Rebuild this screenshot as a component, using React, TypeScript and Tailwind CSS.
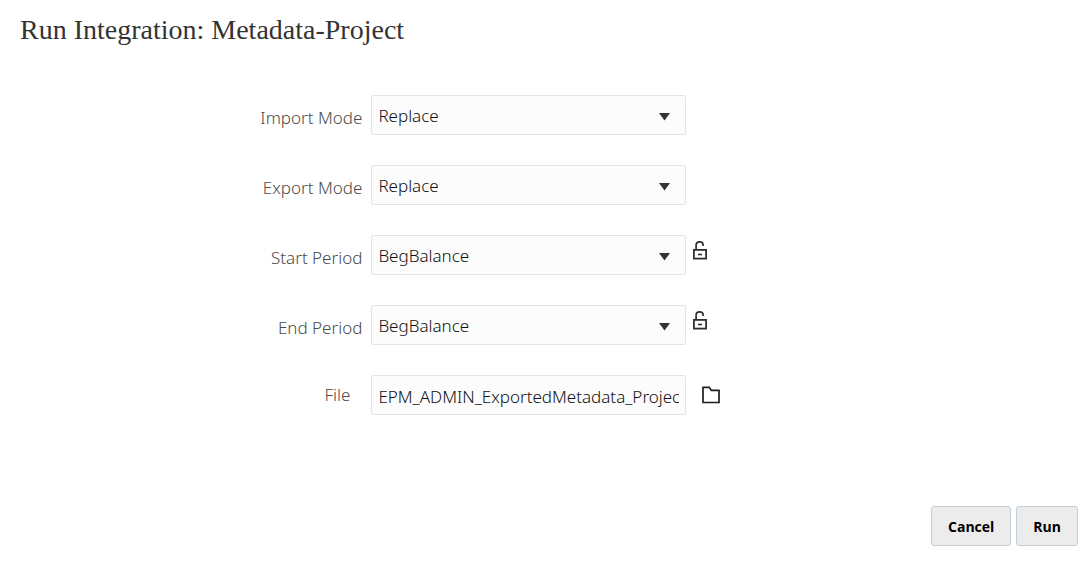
import { useState, type ReactNode } from "react";

const sans = "font-['Noto_Sans','Open_Sans',sans-serif]";
const field =
  "h-10 w-full appearance-none rounded-xs border border-[#e4e4e4] bg-[#fcfcfc] px-1.5 pt-0.5 text-[17px] font-light text-[#111] outline-none focus:border-[#8aa4b8]";

function UnlockIcon() {
  return (
    <svg width="14" height="19" viewBox="0 0 14 19" fill="none" stroke="#2f2f35" aria-hidden="true">
      <rect x="0.9" y="8.9" width="12.2" height="8.7" strokeWidth="1.8" />
      <path d="M3.1 8.5V4.2C3.1 2.1 4.5 0.9 6.6 0.9S10.1 2.1 10.1 4.2V5" strokeWidth="1.7" />
      <path d="M5 13.5H9" strokeWidth="1.6" />
    </svg>
  );
}

function FolderIcon() {
  return (
    <svg width="18" height="18" viewBox="0 0 18 18" fill="none" stroke="#1d1d22" strokeWidth="1.7" aria-hidden="true">
      <path d="M1 1.4H7.3L9.3 4.4H17V16.5H1Z" />
    </svg>
  );
}

function Row({ id, label, children, action, file }: {
  id: string;
  label: string;
  children: ReactNode;
  action?: ReactNode;
  file?: boolean;
}) {
  return (
    <div className="flex h-10">
      <label
        htmlFor={id}
        className={`w-[33.4%] shrink-0 text-right text-[17px] leading-6 font-light text-[#4a4a4a] ${file ? "pt-2 pr-3" : "pt-[11px]"}`}
      >
        {label}
      </label>
      <div className="relative ml-[9px] w-[29%]">{children}</div>
      {action}
    </div>
  );
}

function Picker({ id, options }: { id: string; options: string[] }) {
  const [value, setValue] = useState(options[0]);
  return (
    <>
      <select id={id} value={value} onChange={(e) => setValue(e.target.value)} className={field}>
        {options.map((o) => (
          <option key={o}>{o}</option>
        ))}
      </select>
      <svg
        className="pointer-events-none absolute top-[18px] right-4"
        width="11"
        height="8"
        viewBox="0 0 11 8"
        aria-hidden="true"
      >
        <path d="M0 0H11L5.5 7.5Z" fill="#333" />
      </svg>
    </>
  );
}

function LockButton({ label }: { label: string }) {
  return (
    <button type="button" aria-label={label} className="ml-[7px] self-start pt-1.5">
      <UnlockIcon />
    </button>
  );
}

const button =
  "h-10 rounded-[3px] border border-[#c4ced7] bg-[#ececec] px-4 pt-0.5 font-['Open_Sans',sans-serif] text-sm font-bold text-black hover:bg-[#e2e2e2]";

export default function App() {
  const [file, setFile] = useState("EPM_ADMIN_ExportedMetadata_Project.csv");
  return (
    <main className={`min-h-screen bg-white pt-3 ${sans}`}>
      <h1 className="px-5 font-['Liberation_Serif',serif] text-[28px] leading-9 text-[#333]">
        Run Integration: Metadata-Project
      </h1>
      <form onSubmit={(e) => e.preventDefault()}>
        <div className="mt-[47px] flex flex-col gap-[30px]">
          <Row id="import-mode" label="Import Mode">
            <Picker id="import-mode" options={["Replace", "Merge", "No Import"]} />
          </Row>
          <Row id="export-mode" label="Export Mode">
            <Picker id="export-mode" options={["Replace", "Merge", "No Export"]} />
          </Row>
          <Row id="start-period" label="Start Period" action={<LockButton label="Lock start period" />}>
            <Picker id="start-period" options={["BegBalance"]} />
          </Row>
          <Row id="end-period" label="End Period" action={<LockButton label="Lock end period" />}>
            <Picker id="end-period" options={["BegBalance"]} />
          </Row>
          <Row
            id="file"
            label="File"
            file
            action={
              <button type="button" aria-label="Browse for file" className="ml-4">
                <FolderIcon />
              </button>
            }
          >
            <input id="file" type="text" value={file} onChange={(e) => setFile(e.target.value)} className={field} />
          </Row>
        </div>
        <div className="mt-[91px] flex justify-end gap-[5px] pr-[7px]">
          <button type="button" className={button}>Cancel</button>
          <button type="submit" className={button}>Run</button>
        </div>
      </form>
    </main>
  );
}
